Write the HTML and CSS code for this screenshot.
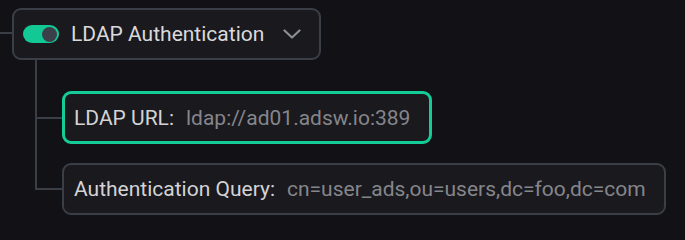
FILE: index.html
```html
<!DOCTYPE html>
<html>
<head>
<meta charset="utf-8">
<link rel="stylesheet" href="styles.css">
</head>
<body>
<div class="tree">
  <div class="root-row">
    <div class="stub"></div>
    <div class="node head">
      <span class="toggle"><span class="knob"></span></span>
      <span class="head-title">LDAP Authentication</span>
      <svg class="chevron" width="18" height="10" viewBox="0 0 18 10"><path d="M1.5 1.5 L9 8.5 L16.5 1.5" fill="none" stroke="#8b8e94" stroke-width="2.2" stroke-linecap="round" stroke-linejoin="round"/></svg>
    </div>
  </div>
  <div class="children">
    <div class="child first">
      <div class="elbow"></div>
      <div class="tail"></div>
      <div class="node field active">
        <span class="label">LDAP URL:</span>
        <span class="value">ldap://ad01.adsw.io:389</span>
      </div>
    </div>
    <div class="child last">
      <div class="elbow"></div>
      <div class="node field">
        <span class="label">Authentication Query:</span>
        <span class="value">cn=user_ads,ou=users,dc=foo,dc=com</span>
      </div>
    </div>
  </div>
</div>
</body>
</html>
```
FILE: styles.css
```css
html, body {
  margin: 0;
  padding: 0;
  background: #121116;
  height: 100%;
}
body {
  font-family: Roboto, "Noto Sans", sans-serif;
  color: #d6d6d8;
}
.tree {
  padding-top: 8px;
}
.root-row {
  display: flex;
  align-items: center;
}
.stub {
  width: 12px;
  height: 2px;
  background: #3a3f47;
  margin-top: -2px;
}
.node {
  box-sizing: border-box;
  display: flex;
  align-items: center;
  background: #1a191e;
  border: 2px solid #3a3f47;
  border-radius: 9px;
}
.head {
  height: 52px;
  padding: 0 18px 0 9px;
}
.toggle {
  width: 36px;
  height: 18px;
  border-radius: 9px;
  background: #12c996;
  display: flex;
  align-items: center;
  justify-content: flex-end;
  padding-right: 2px;
  box-sizing: border-box;
}
.knob {
  width: 15px;
  height: 15px;
  border-radius: 50%;
  background: #3b3f4a;
}
.head-title {
  font-size: 21px;
  margin-left: 12px;
  color: #d9d9db;
}
.chevron {
  margin-left: 19px;
  display: block;
}
.children {
  margin-left: 35px;
}
.child {
  display: grid;
  grid-template-columns: 27px auto;
  grid-template-rows: 31px 1fr 1fr;
  justify-content: start;
}
.child.last {
  grid-template-rows: 19px 1fr 1fr;
}
.elbow {
  grid-column: 1;
  grid-row: 1 / 3;
  border-left: 2px solid #3a3f47;
  border-bottom: 2px solid #3a3f47;
  margin-bottom: -1px;
}
.tail {
  grid-column: 1;
  grid-row: 3;
  border-left: 2px solid #3a3f47;
}
.field {
  grid-column: 2;
  grid-row: 2 / 4;
  height: 52px;
  padding: 0 18px 0 10px;
  font-size: 21px;
}
.field.active {
  border: 3px solid #14cc98;
  height: 53px;
  padding-left: 9px;
  padding-right: 19px;
}
.label {
  color: #d3d3d5;
}
.value {
  color: #85868b;
  margin-left: 12px;
}
```
